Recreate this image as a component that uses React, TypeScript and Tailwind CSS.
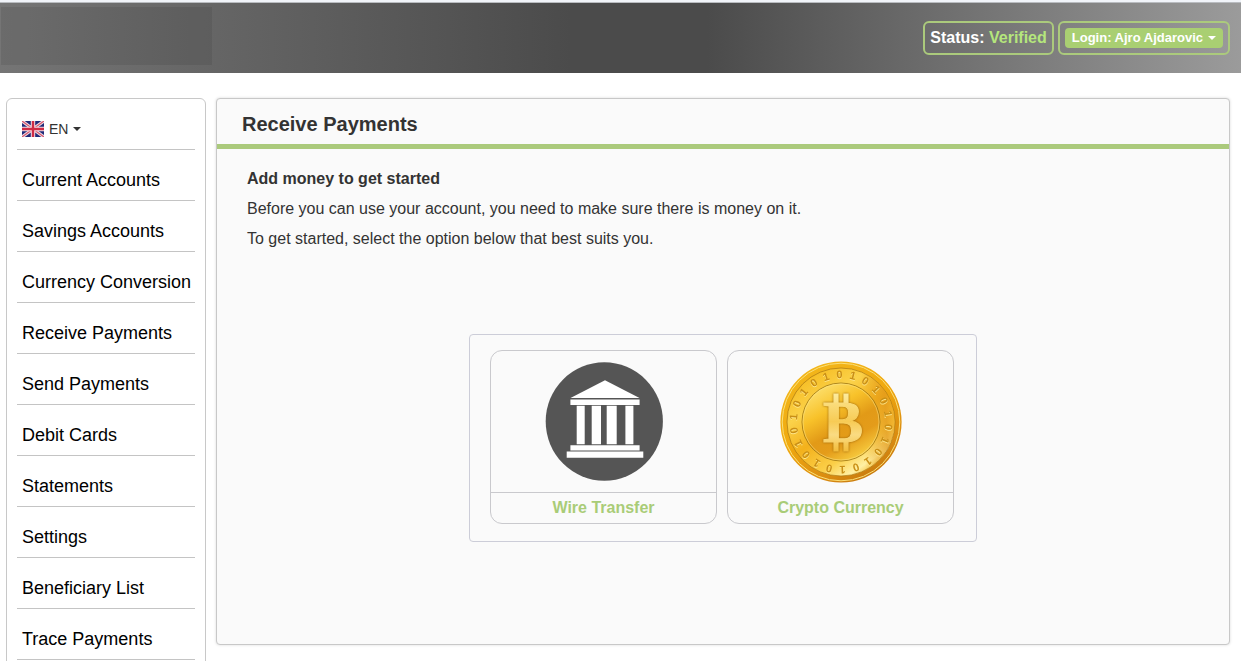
import type { ReactNode } from "react";

const NAV_ITEMS = [
  "Current Accounts",
  "Savings Accounts",
  "Currency Conversion",
  "Receive Payments",
  "Send Payments",
  "Debit Cards",
  "Statements",
  "Settings",
  "Beneficiary List",
  "Trace Payments",
];

// one digit every 360 / 22 degrees around the rim of the coin
const COIN_DIGITS = Array.from({ length: 22 }, (_, i) => ({
  digit: i % 2 === 0 ? "0" : "1",
  angle: (i * 360) / 22 - 2,
}));

function Caret() {
  return (
    <svg viewBox="0 0 8 4" className="h-1 w-2 fill-current" aria-hidden="true">
      <path d="M0 0h8L4 4z" />
    </svg>
  );
}

function UkFlag() {
  return (
    <svg viewBox="0 0 22 16" className="h-4 w-[22px]" aria-hidden="true">
      <rect width="22" height="16" fill="#1f2a78" />
      <path d="M0 0L22 16M22 0L0 16" stroke="#efdbe4" strokeWidth="3.2" />
      <path d="M0 0L22 16M22 0L0 16" stroke="#d5566c" strokeWidth="1.2" />
      <path d="M11 0V16M0 8H22" stroke="#f3dfe6" strokeWidth="4.4" />
      <path d="M11 0V16M0 8H22" stroke="#cf2b45" strokeWidth="2.4" />
    </svg>
  );
}

function BankIcon() {
  return (
    <svg viewBox="0 0 118 119" className="h-[119px] w-[118px]" aria-hidden="true">
      <ellipse cx="59.3" cy="59.5" rx="58.6" ry="59.2" fill="#555" />
      <g fill="#fff">
        <path d="M60 18.3L94.5 36H25.5z" />
        <path d="M25.4 37.4h69.2V43H25.4z" />
        <path d="M31.7 43.8h8v38.5h-8zM46.7 43.8h9.3v38.5h-9.3zM61.7 43.8h10v38.5h-10zM80.4 43.8h8v38.5h-8z" />
        <path d="M25.4 83.2h69.2v5.2H25.4zM21.7 89.6h76.6v6.2H21.7z" />
      </g>
    </svg>
  );
}

function BitcoinIcon() {
  return (
    <svg viewBox="0 0 122 122" className="h-[122px] w-[122px]" aria-hidden="true">
      <defs>
        <linearGradient id="rim" x1="0.2" y1="0" x2="0.8" y2="1">
          <stop offset="0" stopColor="#f3b81c" />
          <stop offset="0.45" stopColor="#f0a90f" />
          <stop offset="0.8" stopColor="#d98a10" />
          <stop offset="1" stopColor="#c0740e" />
        </linearGradient>
        <linearGradient id="band" x1="0.15" y1="0.1" x2="0.75" y2="1">
          <stop offset="0" stopColor="#f6bd24" />
          <stop offset="0.25" stopColor="#fbd24a" />
          <stop offset="0.5" stopColor="#f3b11c" />
          <stop offset="0.75" stopColor="#fbcf48" />
          <stop offset="0.9" stopColor="#fff0a4" />
          <stop offset="1" stopColor="#f3b92c" />
        </linearGradient>
        <linearGradient id="bandShade" x1="0" y1="0.5" x2="1" y2="0.45">
          <stop offset="0.7" stopColor="#e29a17" stopOpacity="0" />
          <stop offset="0.92" stopColor="#e0951a" stopOpacity="0.7" />
          <stop offset="1" stopColor="#e9a01c" stopOpacity="0.5" />
        </linearGradient>
        <linearGradient id="face" x1="0.2" y1="0.05" x2="0.75" y2="1">
          <stop offset="0" stopColor="#fde06e" />
          <stop offset="0.3" stopColor="#f8c22a" />
          <stop offset="0.55" stopColor="#e29a17" />
          <stop offset="0.72" stopColor="#e49c1a" />
          <stop offset="1" stopColor="#fbd546" />
        </linearGradient>
        <linearGradient id="sign" x1="0" y1="0" x2="0" y2="1">
          <stop offset="0" stopColor="#fdeb9c" />
          <stop offset="0.5" stopColor="#f7cb55" />
          <stop offset="0.7" stopColor="#fadb82" />
          <stop offset="1" stopColor="#f3bd3c" />
        </linearGradient>
      </defs>
      <circle cx="61" cy="61" r="60.6" fill="url(#rim)" />
      <circle cx="61" cy="61" r="58.8" fill="none" stroke="#fbe07a" strokeWidth="1" />
      <circle cx="61" cy="61" r="54" fill="url(#band)" stroke="#a87410" strokeWidth="0.7" />
      <circle cx="61" cy="61" r="53.6" fill="url(#bandShade)" />
      <circle cx="61" cy="61" r="39" fill="url(#face)" stroke="#9a7412" strokeWidth="0.8" />
      <circle cx="61" cy="61" r="38" fill="none" stroke="#fbe48a" strokeWidth="0.5" />
      <g
        fill="#c98f16"
        fontSize="11"
        fontWeight="700"
        textAnchor="middle"
        className="font-['Liberation_Sans',sans-serif] drop-shadow-[0_1px_0_#fde58a]"
      >
        {COIN_DIGITS.map(({ digit, angle }) => (
          <text key={angle} x="61" y="17" transform={`rotate(${angle} 61 61)`}>
            {digit}
          </text>
        ))}
      </g>
      <g
        fill="url(#sign)"
        stroke="url(#sign)"
        strokeWidth="1.2"
        className="drop-shadow-[0_0_1px_#9a6408]"
      >
        <path d="M54 33h4v9h-4zM64 33h4v9h-4zM54 80h4v10h-4zM64 80h4v10h-4z" />
        <text
          x="63"
          y="80.5"
          fontSize="60"
          fontWeight="700"
          textAnchor="middle"
          className="font-['Liberation_Serif',serif]"
        >
          B
        </text>
      </g>
    </svg>
  );
}

function PaymentOption({ label, children }: { label: string; children: ReactNode }) {
  return (
    <a
      href="#"
      className="flex w-[227px] flex-col rounded-xl border border-[#c9c9cd] text-center font-bold text-[#a9cc77]"
    >
      <span className="flex h-[142px] items-center justify-center border-b border-[#c9c9cd]">
        {children}
      </span>
      <span className="h-[30px] leading-[30px]">{label}</span>
    </a>
  );
}

export default function App() {
  return (
    <div className="bg-white font-['Liberation_Sans',Arial,sans-serif] text-base text-[#333]">
      <div className="h-[3px] border-b border-[#b9bcc0] bg-[#f1f4f9]" />
      <header className="flex h-[70px] items-start justify-between bg-[linear-gradient(to_right,#757575,#4b4b4b_46%,#4b4b4b_57%,#9b9b9b)] pr-[11px]">
        <div className="mt-1 ml-px h-[58px] w-[211px] bg-black/8" />
        <div className="mt-[18px] flex gap-1 font-bold text-white">
          <div className="flex h-[34px] items-center rounded-md border-2 border-[#abca7c] px-[5px]">
            <span className="whitespace-pre">
              Status: <span className="text-[#b5e67c]">Verified</span>
            </span>
          </div>
          <div className="flex h-[34px] items-center rounded-md border-2 border-[#abca7c] px-[5px]">
            <button
              type="button"
              className="flex h-5 items-center gap-[5px] rounded bg-[#a9cf72] px-[7px] text-[13px]"
            >
              Login: Ajro Ajdarovic
              <Caret />
            </button>
          </div>
        </div>
      </header>

      <div className="flex items-start gap-2.5 pt-[25px] pr-[11px] pl-1.5">
        <nav className="w-[200px] shrink-0 rounded-md border border-[#c8c8c8] px-2.5 pb-2.5">
          <button
            type="button"
            className="flex h-[51px] w-full items-center gap-[5px] border-b border-[#c4c4c4] pt-2.5 pl-[5px] text-sm"
          >
            <UkFlag />
            <span>EN</span>
            <Caret />
          </button>
          <ul>
            {NAV_ITEMS.map((item) => (
              <li key={item}>
                <a
                  href="#"
                  className="flex h-[51px] items-center border-b border-[#c4c4c4] pt-2.5 pl-[5px] text-lg whitespace-nowrap text-black"
                >
                  {item}
                </a>
              </li>
            ))}
          </ul>
        </nav>

        <main className="min-h-[547px] flex-1 rounded border border-[#c8c8c8] bg-[#fafafa] shadow-[0_0_3px_rgba(0,0,0,0.15)]">
          <h1 className="h-[50px] border-b-5 border-[#abca7c] pl-[25px] text-xl leading-[50px] font-bold">
            Receive Payments
          </h1>
          <div className="px-[30px] pt-[15px] leading-[30px]">
            <h2 className="font-bold">Add money to get started</h2>
            <p>Before you can use your account, you need to make sure there is money on it.</p>
            <p>To get started, select the option below that best suits you.</p>
          </div>
          <div className="mx-auto mt-20 flex w-[508px] gap-2.5 rounded border border-[#cccdd8] px-5 pt-[15px] pb-[17px]">
            <PaymentOption label="Wire Transfer">
              <BankIcon />
            </PaymentOption>
            <PaymentOption label="Crypto Currency">
              <BitcoinIcon />
            </PaymentOption>
          </div>
        </main>
      </div>
    </div>
  );
}
